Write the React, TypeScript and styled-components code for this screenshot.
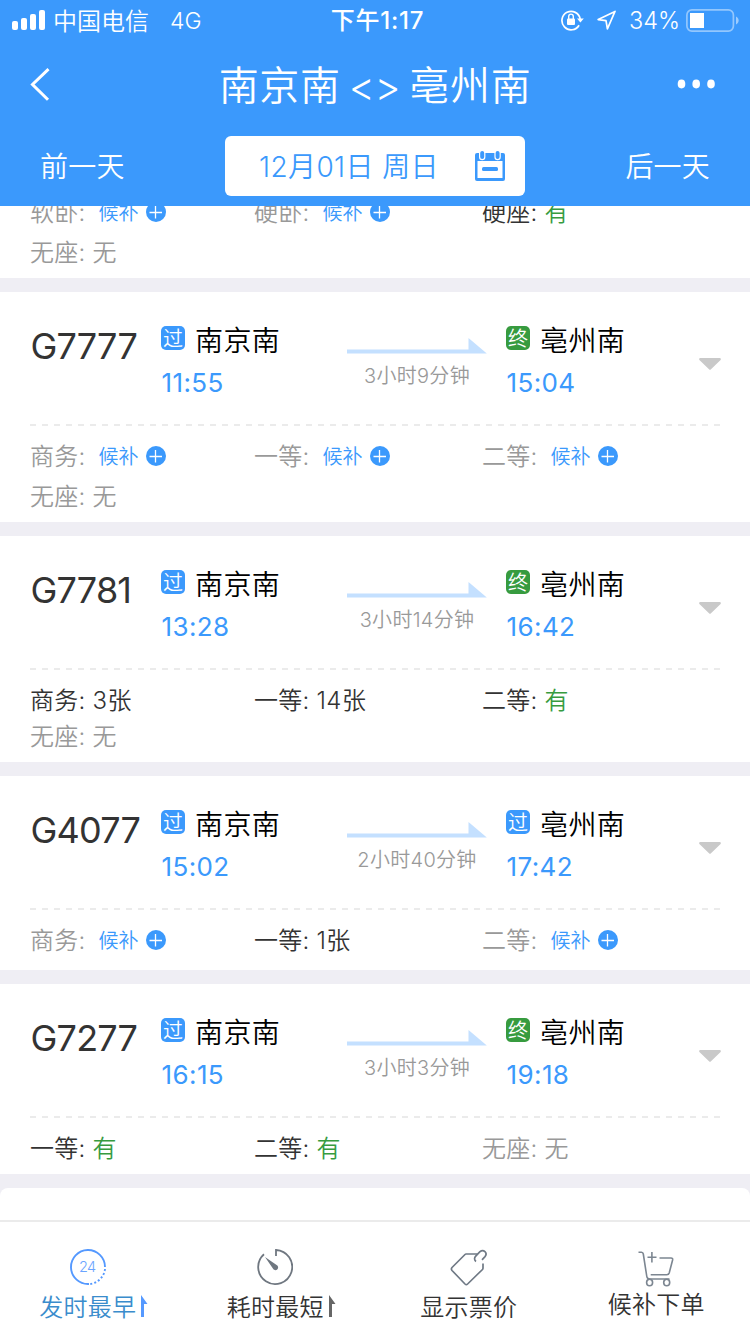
import React from 'react';
import styled, { createGlobalStyle } from 'styled-components';

const BLUE = '#3b99fc';
const GREEN = '#379b3f';
const GRAY = '#999999';
const DARK = '#333333';

const GlobalStyle = createGlobalStyle`
  * { box-sizing: border-box; }
  body { margin: 0; }
  svg { display: block; flex: none; }
`;

const Page = styled.div`
  width: 750px;
  height: 1334px;
  display: flex;
  flex-direction: column;
  overflow: hidden;
  background: #efeef4;
  font-family: Inter, 'Noto Sans CJK SC', sans-serif;
  font-weight: 350;
  white-space: nowrap;
`;

const Header = styled.header`
  flex: none;
  height: 206px;
  background: ${BLUE};
  color: #fff;
`;

const StatusBar = styled.div`
  height: 40px;
  display: grid;
  grid-template-columns: 1fr auto 1fr;
  grid-template-rows: 40px;
  align-items: center;
  padding: 0 11px 0 12px;
  font-size: 24px;
  line-height: 38px;
`;

const Carrier = styled.div`
  display: flex;
  align-items: center;
`;

const CarrierName = styled.span`
  padding-top: 3px;
  margin: 0 0 -1px 8px;
`;

const Network = styled.span`
  padding-top: 2px;
  margin-left: 21px;
  font-size: 23px;
`;

const Clock = styled.div`
  padding: 2px 0 0 4px;
  font-size: 24px;
  font-weight: 500;
  letter-spacing: 0.8px;
`;

const StatusIcons = styled.div`
  display: flex;
  align-items: center;
  justify-content: flex-end;
`;

const Percent = styled.span`
  padding-top: 2px;
  margin: 0 6px 0 13px;
  font-size: 23.5px;
`;

const NavBar = styled.div`
  height: 88px;
  display: grid;
  grid-template-columns: 100px 1fr 100px;
  align-items: center;
`;

const BackSlot = styled.div`
  padding-left: 30px;
`;

const MoreSlot = styled.div`
  display: flex;
  justify-content: flex-end;
  padding-right: 35px;
`;

const Title = styled.h1`
  margin: 0;
  padding-top: 3px;
  display: flex;
  justify-content: center;
  font-size: 40px;
  font-weight: 350;
  letter-spacing: 0.7px;
  line-height: 85px;
`;

const Between = styled.span`
  margin: 0 9px 0 8px;
  padding-top: 3px;
  line-height: 82px;
  letter-spacing: -0.4px;
`;

const DateBar = styled.div`
  height: 78px;
  display: flex;
  align-items: center;
  justify-content: space-between;
  padding: 8px 40px 10px;
`;

const DayLink = styled.span`
  padding-top: 2px;
  font-size: 28px;
  letter-spacing: 0.2px;
  line-height: 58px;
`;

const DateBox = styled.div`
  width: 300px;
  height: 60px;
  display: flex;
  align-items: center;
  justify-content: space-between;
  padding: 0 19px 0 34px;
  border-radius: 6px;
  background: #fff;
  color: ${BLUE};
  font-size: 28px;
  line-height: 58px;
`;

const DateText = styled.span`
  padding-top: 2px;
  letter-spacing: 0.4px;
`;

const List = styled.main`
  flex: 1;
  min-height: 0;
  overflow: hidden;
`;

const Card = styled.section<{ $cut?: boolean }>`
  margin: ${(p) => (p.$cut ? '-14px' : '0')} 0 14px;
  padding-bottom: 10px;
  background: #fff;
`;

const NextCard = styled.section`
  height: 60px;
  border-radius: 8px;
  background: #fff;
`;

const Trip = styled.div`
  height: 132px;
  display: grid;
  grid-template-columns: 131px 186px 140px 19px 174px 1fr;
  padding: 0 29px 0 30px;
`;

const TrainNo = styled.div`
  padding: 30px 0 0 0.5px;
  font-size: 36px;
  font-weight: 375;
  letter-spacing: -0.8px;
  line-height: 48px;
  color: ${DARK};
`;

const Stop = styled.div`
  padding-top: 28px;
`;

const StationLine = styled.div`
  display: flex;
  align-items: center;
  height: 40px;
`;

const Badge = styled.span<{ $last?: boolean }>`
  width: 24px;
  height: 24px;
  margin: -4px 10px 0 0;
  border-radius: 5px;
  background: ${(p) => (p.$last ? GREEN : BLUE)};
  color: #fff;
  font-size: 20px;
  line-height: 26px;
  text-align: center;
`;

const Station = styled.span`
  padding-top: 2px;
  font-size: 28px;
  letter-spacing: 0.4px;
  line-height: 40px;
  color: #000;
`;

const Time = styled.div`
  margin-top: 5px;
  padding-left: 0.5px;
  font-size: 26px;
  font-weight: 375;
  letter-spacing: 0.4px;
  line-height: 36px;
  color: ${BLUE};
`;

const Duration = styled.div`
  padding-top: 46px;
  font-size: 20px;
  line-height: 44px;
  text-align: center;
  color: ${GRAY};
`;

const DurationText = styled.div`
  height: 44px;
  letter-spacing: 0.3px;
`;

const Expand = styled.div`
  padding-top: 66px;
  display: flex;
  align-items: flex-start;
  justify-content: flex-end;
`;

const Dashes = styled.div`
  height: 2px;
  margin: 0 30px 10px;
  background: repeating-linear-gradient(to right, #ebebeb 0 6px, transparent 6px 12px);
`;

const SeatRow = styled.div<{ $tall?: boolean }>`
  height: ${(p) => (p.$tall ? 40 : 36)}px;
  display: grid;
  grid-template-columns: 224px 228px 1fr;
  align-items: start;
  padding: 0 30px;
`;

const Seat = styled.div<{ $dim?: boolean }>`
  display: flex;
  align-items: center;
  height: 40px;
  font-size: 24px;
  letter-spacing: 0.2px;
  line-height: 40px;
  color: ${(p) => (p.$dim ? GRAY : DARK)};
`;

const SeatName = styled.span`
  padding-top: 1px;
`;

const Count = styled.span<{ $free?: boolean }>`
  padding-top: 1px;
  margin-left: 7px;
  letter-spacing: 0.5px;
  color: ${(p) => (p.$free ? GREEN : 'inherit')};
`;

const Waitlist = styled.span`
  padding-top: 2px;
  margin: 0 7px 0 13px;
  font-size: 20px;
  color: ${BLUE};
`;

const TabBar = styled.nav`
  flex: none;
  height: 114px;
  display: grid;
  grid-template-columns: repeat(4, 1fr);
  border-top: 2px solid #ebebeb;
  background: #fff;
`;

const Tab = styled.div<{ $active?: boolean }>`
  display: flex;
  flex-direction: column;
  align-items: center;
  padding-top: 27px;
  color: ${(p) => (p.$active ? '#3a8ccc' : DARK)};
`;

const TabIcon = styled.div<{ $shift?: number; $drop?: number }>`
  height: 39px;
  padding-top: ${(p) => p.$drop ?? 0}px;
  padding-right: ${(p) => p.$shift ?? 0}px;
`;

const TabLabel = styled.div<{ $raised?: boolean }>`
  display: flex;
  align-items: center;
  margin-top: ${(p) => (p.$raised ? -3 : 0)}px;
  font-size: 24px;
  letter-spacing: 0.3px;
  line-height: 40px;
`;

const SortArrowSvg = styled.svg`
  margin: -4px 0 0 4px;
`;

const SortArrow = ({ color }: { color: string }) => (
  <SortArrowSvg width="8" height="22" viewBox="0 0 8 22">
    <path d="M1 0L7.5 9H4V22H1Z" fill={color} />
  </SortArrowSvg>
);

const SignalIcon = () => (
  <svg width="33" height="20" viewBox="0 0 33 20" fill="#fff">
    <rect x="0" y="11" width="6" height="9" rx="2" />
    <rect x="9" y="8" width="6" height="12" rx="2" />
    <rect x="18" y="4" width="6" height="16" rx="2" />
    <rect x="27" y="0" width="6" height="20" rx="2" />
  </svg>
);

const LockIcon = () => (
  <svg width="23" height="22" viewBox="0 0 23 22" fill="none" stroke="#fff">
    <path d="M18.1 16.2A9.2 9.2 0 1 1 19.2 10" strokeWidth="1.7" />
    <path d="M16 9.6H22.8L19.4 13.6Z" fill="#fff" stroke="none" />
    <rect x="6" y="9.5" width="8" height="6.5" rx="1" fill="#fff" stroke="none" />
    <path d="M7.7 10V7.4a2.3 2.3 0 0 1 4.6 0V10" strokeWidth="1.4" />
  </svg>
);

const LocationSvg = styled.svg`
  margin-left: 13px;
`;

const LocationIcon = () => (
  <LocationSvg width="19" height="20" viewBox="0 0 19 20" fill="none" stroke="#fff" strokeWidth="1.7" strokeLinejoin="round">
    <path d="M18 1.4L1.2 9.6L9 10.6L10.4 18.8Z" />
  </LocationSvg>
);

const BatteryIcon = () => (
  <svg width="53" height="23" viewBox="0 0 53 23" fill="none">
    <rect x="0.9" y="0.9" width="46.5" height="21.2" rx="5" stroke="#fff" strokeOpacity="0.45" strokeWidth="1.7" />
    <rect x="4" y="4" width="14" height="15" fill="#fff" />
    <path d="M50 7.5C53.5 9 53.5 14 50 15.5Z" fill="#fff" fillOpacity="0.5" />
  </svg>
);

const BackIcon = () => (
  <svg width="20" height="33" viewBox="0 0 20 33" fill="none" stroke="#fff" strokeWidth="3">
    <path d="M18.5 1.2L2.5 16.5L18 31.8" />
  </svg>
);

const MoreIcon = () => (
  <svg width="38" height="10" viewBox="0 0 38 10" fill="#fff">
    <ellipse cx="4.5" cy="5" rx="3.8" ry="4.4" />
    <ellipse cx="19.2" cy="5" rx="3.8" ry="4.4" />
    <ellipse cx="34" cy="5" rx="3.8" ry="4.4" />
  </svg>
);

const CalendarIcon = () => (
  <svg width="32" height="32" viewBox="0 0 32 32">
    <path d="M3 3H29Q31 3 31 5V29Q31 31 29 31H3Q1 31 1 29V5Q1 3 3 3Z" fill={BLUE} />
    <rect x="3.5" y="11" width="25" height="17" fill="#fff" />
    <rect x="8" y="17" width="16" height="4" rx="1.5" fill={BLUE} />
    <g fill={BLUE} stroke="#fff" strokeWidth="1.2">
      <rect x="5.6" y="0.4" width="5.2" height="9.2" rx="2.6" />
      <rect x="21" y="0.4" width="5.2" height="9.2" rx="2.6" />
    </g>
  </svg>
);

const ArrowIcon = () => (
  <svg width="140" height="16" viewBox="0 0 140 16" fill="#c4e0ff">
    <path d="M0 11.5H121.5V0L139.8 15.5H0Z" />
  </svg>
);

const CaretIcon = () => (
  <svg width="22" height="13" viewBox="0 0 22 13">
    <path d="M1 0H21Q22.4 0.6 21.6 2L12 11.3Q11 12.4 10 11.3L0.4 2Q-0.4 0.6 1 0Z" fill="#c9c9c9" />
  </svg>
);

const PlusIcon = () => (
  <svg width="20" height="20" viewBox="0 0 20 20">
    <circle cx="10" cy="10" r="10" fill={BLUE} />
    <path d="M3.5 10.5H16M9.5 4V16.5" stroke="#fff" strokeWidth="1.3" />
  </svg>
);

const DepartIcon = () => (
  <svg width="36" height="36" viewBox="0 0 36 36" fill="none" stroke="#5599ff" strokeWidth="1.9">
    <path d="M35 18A17 17 0 1 0 19 35" />
    <path d="M35 20A17 17 0 0 1 20 35" strokeDasharray="2 2.1" />
    <text x="17.3" y="23.2" textAnchor="middle" fontSize="14.5" letterSpacing="-0.6" fontFamily="Inter, sans-serif" fill="#6aa4ff" stroke="none">24</text>
  </svg>
);

const TimerIcon = () => (
  <svg width="36" height="36" viewBox="0 0 36 36" fill="none" stroke="#6f7780" strokeWidth="1.8">
    <path d="M19 7V1A17 17 0 1 1 7 5.2" />
    <path d="M8 8L19.6 16A2.7 2.7 0 1 1 15.9 19.4Z" fill="#6f7780" stroke="none" />
  </svg>
);

const TagIcon = () => (
  <svg width="38" height="38" viewBox="0 0 38 38" fill="none" stroke="#6f7985" strokeWidth="1.7" strokeLinejoin="round">
    <path d="M27.5 5H16Q15.5 5 15 5.5L2 18.5Q.8 20 2 21.5L15 35Q16.3 36.2 17.6 35L32.5 20.5Q33 20 33 19V14.5" />
    <path d="M26 12.5C24.3 11.2 24 9 25.7 7.2L30 2.7C33.5 -0.2 38 4 35 7.6L32 10.8" />
  </svg>
);

const CartIcon = () => (
  <svg width="36" height="36" viewBox="0 0 36 36" fill="none" stroke="#7c8691" strokeWidth="1.6">
    <path d="M0.5 1.2H3.5Q5 1.3 5.3 3L8.8 25.5Q9.2 28 12 28H31.5" />
    <path d="M21.5 7H33Q35 7 34.6 9L31.2 22Q30.7 23.7 28.8 23.7H12.7M13.9 1V11.5M9.5 6.3H18.5" />
    <ellipse cx="11.6" cy="31.5" rx="3" ry="3.3" />
    <ellipse cx="28.7" cy="31.5" rx="3" ry="3.3" />
  </svg>
);

type SeatInfo = { name: string; left: string };
type Train = {
  no: string;
  depart: string;
  arrive: string;
  duration: string;
  last: boolean;
  seats: SeatInfo[][];
};

const WAIT = '候补';

const TRAINS: Train[] = [
  {
    no: 'G7777', depart: '11:55', arrive: '15:04', duration: '3小时9分钟', last: true,
    seats: [
      [{ name: '商务', left: WAIT }, { name: '一等', left: WAIT }, { name: '二等', left: WAIT }],
      [{ name: '无座', left: '无' }],
    ],
  },
  {
    no: 'G7781', depart: '13:28', arrive: '16:42', duration: '3小时14分钟', last: true,
    seats: [
      [{ name: '商务', left: '3张' }, { name: '一等', left: '14张' }, { name: '二等', left: '有' }],
      [{ name: '无座', left: '无' }],
    ],
  },
  {
    no: 'G4077', depart: '15:02', arrive: '17:42', duration: '2小时40分钟', last: false,
    seats: [[{ name: '商务', left: WAIT }, { name: '一等', left: '1张' }, { name: '二等', left: WAIT }]],
  },
  {
    no: 'G7277', depart: '16:15', arrive: '19:18', duration: '3小时3分钟', last: true,
    seats: [[{ name: '一等', left: '有' }, { name: '二等', left: '有' }, { name: '无座', left: '无' }]],
  },
];

const PREVIOUS_SEATS: SeatInfo[][] = [
  [{ name: '软卧', left: WAIT }, { name: '硬卧', left: WAIT }, { name: '硬座', left: '有' }],
  [{ name: '无座', left: '无' }],
];

const Seats = ({ rows }: { rows: SeatInfo[][] }) => (
  <>
    {rows.map((row, i) => (
      <SeatRow key={i} $tall={row.some((s) => s.left === WAIT)}>
        {row.map((s) => (
          <Seat key={s.name} $dim={s.left === WAIT || s.left === '无'}>
            <SeatName>{s.name}:</SeatName>
            {s.left === WAIT ? (
              <>
                <Waitlist>{WAIT}</Waitlist>
                <PlusIcon />
              </>
            ) : (
              <Count $free={s.left === '有'}>{s.left}</Count>
            )}
          </Seat>
        ))}
      </SeatRow>
    ))}
  </>
);

const TrainCard = ({ train }: { train: Train }) => (
  <Card>
    <Trip>
      <TrainNo>{train.no}</TrainNo>
      <Stop>
        <StationLine>
          <Badge>过</Badge>
          <Station>南京南</Station>
        </StationLine>
        <Time>{train.depart}</Time>
      </Stop>
      <Duration>
        <ArrowIcon />
        <DurationText>{train.duration}</DurationText>
      </Duration>
      <span />
      <Stop>
        <StationLine>
          <Badge $last={train.last}>{train.last ? '终' : '过'}</Badge>
          <Station>亳州南</Station>
        </StationLine>
        <Time>{train.arrive}</Time>
      </Stop>
      <Expand>
        <CaretIcon />
      </Expand>
    </Trip>
    <Dashes />
    <Seats rows={train.seats} />
  </Card>
);

export default function App() {
  return (
    <Page lang="zh-CN">
      <GlobalStyle />
      <Header>
        <StatusBar>
          <Carrier>
            <SignalIcon />
            <CarrierName>中国电信</CarrierName>
            <Network>4G</Network>
          </Carrier>
          <Clock>下午1:17</Clock>
          <StatusIcons>
            <LockIcon />
            <LocationIcon />
            <Percent>34%</Percent>
            <BatteryIcon />
          </StatusIcons>
        </StatusBar>
        <NavBar>
          <BackSlot><BackIcon /></BackSlot>
          <Title>
            <span>南京南</span>
            <Between>&lt;&gt;</Between>
            <span>亳州南</span>
          </Title>
          <MoreSlot><MoreIcon /></MoreSlot>
        </NavBar>
        <DateBar>
          <DayLink>前一天</DayLink>
          <DateBox>
            <DateText>12月01日 周日</DateText>
            <CalendarIcon />
          </DateBox>
          <DayLink>后一天</DayLink>
        </DateBar>
      </Header>
      <List>
        <Card $cut>
          <Seats rows={PREVIOUS_SEATS} />
        </Card>
        {TRAINS.map((t) => (
          <TrainCard key={t.no} train={t} />
        ))}
        <NextCard />
      </List>
      <TabBar>
        <Tab $active>
          <TabIcon $shift={12}><DepartIcon /></TabIcon>
          <TabLabel>发时最早<SortArrow color="#5599ff" /></TabLabel>
        </Tab>
        <Tab>
          <TabIcon $shift={12}><TimerIcon /></TabIcon>
          <TabLabel>耗时最短<SortArrow color="#666" /></TabLabel>
        </Tab>
        <Tab>
          <TabIcon><TagIcon /></TabIcon>
          <TabLabel>显示票价</TabLabel>
        </Tab>
        <Tab>
          <TabIcon $drop={2}><CartIcon /></TabIcon>
          <TabLabel $raised>候补下单</TabLabel>
        </Tab>
      </TabBar>
    </Page>
  );
}
